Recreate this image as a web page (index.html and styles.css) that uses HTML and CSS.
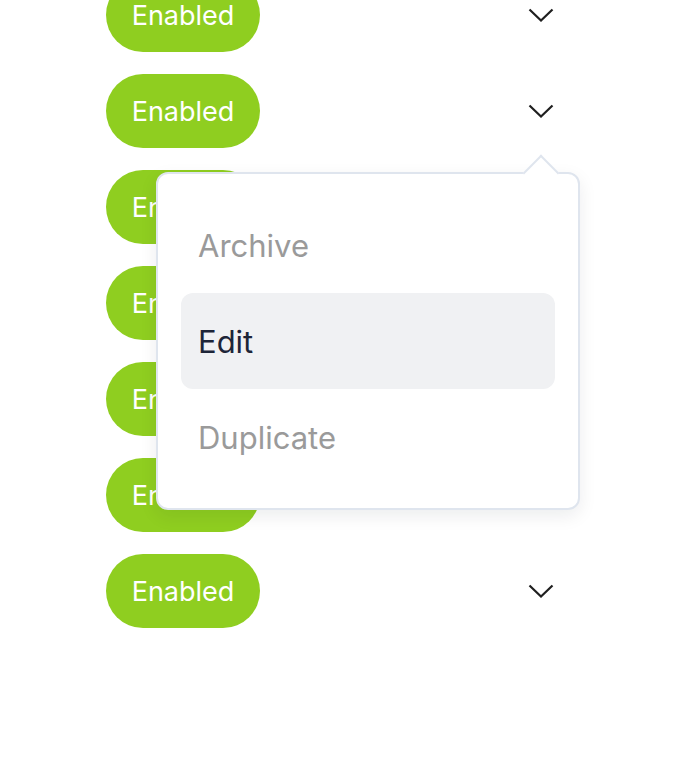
FILE: index.html
```html
<!DOCTYPE html>
<html lang="en">
<head>
<meta charset="utf-8">
<title>Status list</title>
<link rel="stylesheet" href="styles.css">
</head>
<body>
<div class="list">
  <div class="row"><span class="pill">Enabled</span><svg class="chev" viewBox="0 0 26 14"><path d="M1.5 1.5 L13 12.5 L24.5 1.5"/></svg></div>
  <div class="row"><span class="pill">Enabled</span><svg class="chev" viewBox="0 0 26 14"><path d="M1.5 1.5 L13 12.5 L24.5 1.5"/></svg></div>
  <div class="row"><span class="pill">Enabled</span><svg class="chev" viewBox="0 0 26 14"><path d="M1.5 1.5 L13 12.5 L24.5 1.5"/></svg></div>
  <div class="row"><span class="pill">Enabled</span><svg class="chev" viewBox="0 0 26 14"><path d="M1.5 1.5 L13 12.5 L24.5 1.5"/></svg></div>
  <div class="row"><span class="pill">Enabled</span><svg class="chev" viewBox="0 0 26 14"><path d="M1.5 1.5 L13 12.5 L24.5 1.5"/></svg></div>
  <div class="row"><span class="pill">Enabled</span><svg class="chev" viewBox="0 0 26 14"><path d="M1.5 1.5 L13 12.5 L24.5 1.5"/></svg></div>
  <div class="row"><span class="pill">Enabled</span><svg class="chev" viewBox="0 0 26 14"><path d="M1.5 1.5 L13 12.5 L24.5 1.5"/></svg></div>
</div>
<div class="menu">
  <span class="menu-arrow"></span>
  <div class="item">Archive</div>
  <div class="item active">Edit</div>
  <div class="item">Duplicate</div>
</div>
</body>
</html>
```
FILE: styles.css
```css
html, body {
  margin: 0;
  padding: 0;
  background: #ffffff;
  font-family: Inter, "Noto Sans", sans-serif;
  overflow: hidden;
}

.list {
  margin-top: -22px;
  margin-left: 106px;
  width: 448px;
  display: flex;
  flex-direction: column;
  gap: 22px;
}

.row {
  height: 74px;
  display: flex;
  align-items: center;
  justify-content: space-between;
}

.pill {
  width: 154px;
  height: 74px;
  border-radius: 37px;
  background: #8fce20;
  color: #ffffff;
  font-size: 27px;
  font-weight: 400;
  display: flex;
  align-items: center;
  justify-content: center;
}

.chev {
  width: 26px;
  height: 14px;
  fill: none;
  stroke: #1f1f1f;
  stroke-width: 2.2;
  stroke-linecap: butt;
  stroke-linejoin: miter;
}

.menu {
  position: absolute;
  left: 156px;
  top: 172px;
  width: 424px;
  height: 338px;
  box-sizing: border-box;
  border: 2px solid #dfe5ee;
  border-radius: 12px;
  background: #ffffff;
  box-shadow: 0 6px 18px rgba(15, 23, 42, 0.08);
  padding: 23px;
  display: flex;
  flex-direction: column;
}

.menu-arrow {
  position: absolute;
  top: -14px;
  left: 370px;
  width: 26px;
  height: 26px;
  box-sizing: border-box;
  background: #ffffff;
  border-top: 2px solid #dfe5ee;
  border-left: 2px solid #dfe5ee;
  transform: rotate(45deg);
}

.item {
  height: 96px;
  flex: none;
  display: flex;
  align-items: center;
  padding: 0 17px;
  border-radius: 12px;
  font-size: 31px;
  color: #9a9a9a;
}

.item.active {
  background: #f0f1f3;
  color: #1d2538;
}
```
